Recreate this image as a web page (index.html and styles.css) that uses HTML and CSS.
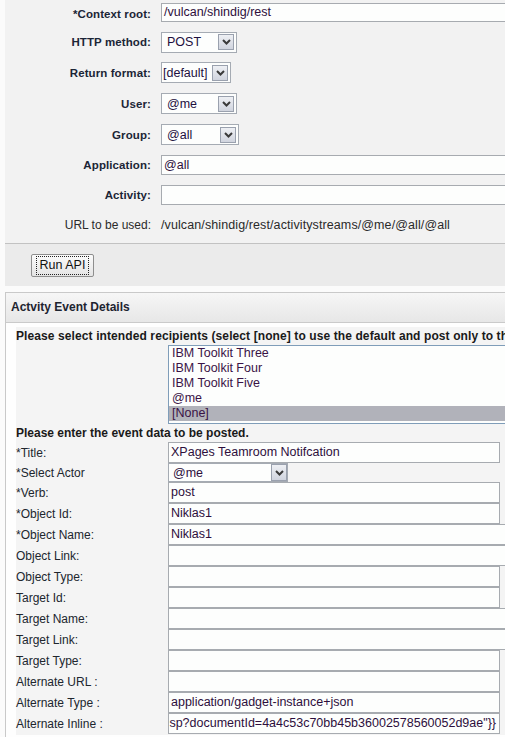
FILE: index.html
```html
<!DOCTYPE html>
<html lang="en">
<head>
<meta charset="utf-8">
<title>Activity Streams API</title>
<link rel="stylesheet" href="styles.css">
</head>
<body>
<div class="page">
  <section class="api-form">
    <div class="api-label">*Context root:</div>
    <div class="api-field api-field--first"><div class="textbox textbox--top">/vulcan/shindig/rest</div></div>

    <div class="api-label">HTTP method:</div>
    <div class="api-field">
      <div class="select select--http"><span class="select-value">POST</span><span class="select-btn"><svg width="9" height="6" viewBox="0 0 9 6"><polyline points="1,1 4.5,4.5 8,1" fill="none" stroke="#3a3a3a" stroke-width="2"/></svg></span></div>
    </div>

    <div class="api-label">Return format:</div>
    <div class="api-field">
      <div class="select select--format"><span class="select-value select-value--tight">[default]</span><span class="select-btn"><svg width="9" height="6" viewBox="0 0 9 6"><polyline points="1,1 4.5,4.5 8,1" fill="none" stroke="#3a3a3a" stroke-width="2"/></svg></span></div>
    </div>

    <div class="api-label">User:</div>
    <div class="api-field">
      <div class="select select--user"><span class="select-value">@me</span><span class="select-btn"><svg width="9" height="6" viewBox="0 0 9 6"><polyline points="1,1 4.5,4.5 8,1" fill="none" stroke="#3a3a3a" stroke-width="2"/></svg></span></div>
    </div>

    <div class="api-label">Group:</div>
    <div class="api-field">
      <div class="select select--group"><span class="select-value">@all</span><span class="select-btn"><svg width="9" height="6" viewBox="0 0 9 6"><polyline points="1,1 4.5,4.5 8,1" fill="none" stroke="#3a3a3a" stroke-width="2"/></svg></span></div>
    </div>

    <div class="api-label">Application:</div>
    <div class="api-field"><div class="textbox textbox--top">@all</div></div>

    <div class="api-label">Activity:</div>
    <div class="api-field"><div class="textbox textbox--top"></div></div>

    <div class="api-label api-label--plain">URL to be used:</div>
    <div class="api-field api-url">/vulcan/shindig/rest/activitystreams/@me/@all/@all</div>
  </section>

  <div class="button-bar">
    <button class="run-btn" type="button"><span class="run-btn-focus">Run API</span></button>
  </div>

  <section class="panel">
    <header class="panel-header">Actvity Event Details</header>
    <div class="panel-body">
      <div class="event-grid">
        <div class="event-heading event-heading--first">Please select intended recipients (select [none] to use the default and post only to the current user)</div>
        <div class="event-list-cell">
          <ul class="listbox">
            <li>IBM Toolkit Three</li>
            <li>IBM Toolkit Four</li>
            <li>IBM Toolkit Five</li>
            <li>@me</li>
            <li class="is-selected">[None]</li>
          </ul>
        </div>
        <div class="event-heading event-heading--data">Please enter the event data to be posted.</div>

        <div class="event-label">*Title:</div>
        <div class="event-field"><div class="textbox">XPages Teamroom Notifcation</div></div>

        <div class="event-label">*Select Actor</div>
        <div class="event-field">
          <div class="select select--actor"><span class="select-value">@me</span><span class="select-btn"><svg width="9" height="6" viewBox="0 0 9 6"><polyline points="1,1 4.5,4.5 8,1" fill="none" stroke="#3a3a3a" stroke-width="2"/></svg></span></div>
        </div>

        <div class="event-label">*Verb:</div>
        <div class="event-field"><div class="textbox">post</div></div>

        <div class="event-label">*Object Id:</div>
        <div class="event-field"><div class="textbox">Niklas1</div></div>

        <div class="event-label">*Object Name:</div>
        <div class="event-field"><div class="textbox textbox--wide">Niklas1</div></div>

        <div class="event-label">Object Link:</div>
        <div class="event-field"><div class="textbox textbox--wide"></div></div>

        <div class="event-label">Object Type:</div>
        <div class="event-field"><div class="textbox"></div></div>

        <div class="event-label">Target Id:</div>
        <div class="event-field"><div class="textbox"></div></div>

        <div class="event-label">Target Name:</div>
        <div class="event-field"><div class="textbox textbox--wide"></div></div>

        <div class="event-label">Target Link:</div>
        <div class="event-field"><div class="textbox textbox--wide"></div></div>

        <div class="event-label">Target Type:</div>
        <div class="event-field"><div class="textbox"></div></div>

        <div class="event-label">Alternate URL :</div>
        <div class="event-field"><div class="textbox"></div></div>

        <div class="event-label">Alternate Type :</div>
        <div class="event-field"><div class="textbox">application/gadget-instance+json</div></div>

        <div class="event-label">Alternate Inline :</div>
        <div class="event-field"><div class="textbox textbox--scrolled"><span>sp?documentId=4a4c53c70bb45b36002578560052d9ae"}}</span></div></div>
      </div>
    </div>
  </section>
</div>
</body>
</html>
```

FILE: styles.css
```css
html {
  overflow: hidden;
}

body {
  margin: 0;
  padding: 0;
  overflow: hidden;
  background: #fbfbfb;
  font-family: "Liberation Sans", Arial, sans-serif;
  font-size: 12px;
  color: #222;
}

.page {
  width: 720px;
}

/* ---------- top API form ---------- */
.api-form {
  margin-left: 5px;
  background: #f2f2f2;
  display: grid;
  grid-template-columns: 146px 1fr;
  grid-template-rows: 27px 30px 31px 31px 31px 30px 30px 29px;
  column-gap: 10px;
  align-items: center;
  padding-bottom: 4px;
}

.api-label {
  text-align: right;
  font-weight: bold;
  font-size: 11.5px;
  letter-spacing: 0.1px;
  color: #1b2536;
  white-space: nowrap;
}

.api-label--plain {
  font-weight: normal;
  font-size: 12px;
  letter-spacing: 0;
  color: #2a2a2a;
}

.api-field {
  display: flex;
  align-items: center;
}

.api-field--first {
  align-self: start;
  margin-top: 3px;
}

.api-url {
  font-size: 12.5px;
  letter-spacing: 0.1px;
  color: #2a2a2a;
  white-space: nowrap;
}

/* ---------- text boxes ---------- */
.textbox {
  box-sizing: border-box;
  height: 21px;
  width: 332px;
  border: 1px solid #a7abb0;
  background: #fdfefd;
  padding: 0 2px;
  font-size: 12.5px;
  line-height: 19px;
  color: #2d0f3c;
  white-space: nowrap;
  overflow: hidden;
}

.textbox--top {
  width: 420px;
  height: 20px;
  line-height: 18px;
  padding-left: 2px;
}

.api-field--first .textbox--top {
  height: 19px;
  line-height: 17px;
}

.textbox--wide {
  width: 420px;
}

.textbox--scrolled {
  display: flex;
  justify-content: flex-end;
  padding: 0 3px 0 1px;
}

.textbox--scrolled span {
  flex-shrink: 0;
}

/* ---------- selects ---------- */
.select {
  box-sizing: border-box;
  display: flex;
  align-items: center;
  justify-content: space-between;
  height: 21px;
  border: 1px solid #a5abb3;
  background: #fdfefd;
  padding-right: 2px;
  font-size: 12.5px;
  color: #1e1040;
}

.select--http { width: 76px; }
.select--format { width: 70px; }
.select--user { width: 76px; }
.select--group { width: 78px; }

.select-value {
  padding-left: 5px;
  white-space: nowrap;
}

.select-value--tight {
  padding-left: 1px;
}

.select-btn {
  box-sizing: border-box;
  width: 16px;
  height: 16px;
  border: 1px solid #9aa1ae;
  background: linear-gradient(#eef0f4, #d0d4de);
  display: flex;
  align-items: center;
  justify-content: center;
}

.select--actor {
  width: 120px;
  height: 19px;
  padding-right: 0;
  color: #2d0f3c;
}

.select--actor .select-value {
  padding-left: 4px;
}

.select--actor .select-btn {
  width: 16px;
  height: 17px;
}

/* ---------- button bar ---------- */
.button-bar {
  margin-left: 5px;
  border-top: 1px solid #c2c2c2;
  background: #ebebeb;
  padding: 10px 0 9px 26px;
  margin-bottom: 6px;
}

.run-btn {
  box-sizing: border-box;
  width: 63px;
  height: 23px;
  border: 1px solid #8e8e8e;
  border-radius: 2px;
  background: linear-gradient(#fbfbfb, #e4e4e4);
  padding: 0;
  display: flex;
  align-items: center;
  justify-content: center;
  font-family: "Liberation Sans", Arial, sans-serif;
  font-size: 12.5px;
  color: #111;
}

.run-btn-focus {
  display: block;
  border: 1px dotted #222;
  padding: 1px 3px;
  line-height: 15px;
}

/* ---------- activity panel ---------- */
.panel {
  margin-left: 5px;
  border-top: 1px solid #c9c9c9;
  border-left: 1px solid #c9c9c9;
  background: #fefefe;
}

.panel-header {
  box-sizing: border-box;
  height: 30px;
  border-bottom: 1px solid #cacaca;
  background: linear-gradient(#f6f6f6, #e7e7e7);
  padding-left: 5px;
  font-weight: bold;
  font-size: 12px;
  line-height: 29px;
  color: #1e2430;
}

.panel-body {
  padding: 4px 0 4px 10px;
}

.event-grid {
  display: grid;
  grid-template-columns: 152px 1fr;
  align-items: center;
  background: #f4f4f4;
  padding-bottom: 1px;
}

.event-heading {
  grid-column: 1 / -1;
  font-weight: bold;
  font-size: 12px;
  color: #1a1a1a;
  white-space: nowrap;
}

.event-heading--first {
  line-height: 18px;
  height: 18px;
  letter-spacing: 0.1px;
}

.event-heading--data {
  line-height: 18px;
  height: 18px;
}

.event-list-cell {
  grid-column: 2;
}

.listbox {
  box-sizing: border-box;
  list-style: none;
  margin: 0;
  width: 420px;
  height: 79px;
  border: 1px solid #7f9db9;
  background: #fdfefd;
  padding: 0 0 2px;
}

.listbox li {
  height: 15px;
  line-height: 15px;
  padding-left: 3px;
  font-size: 12.5px;
  color: #3a1346;
  white-space: nowrap;
}

.listbox li.is-selected {
  background: #b1b2ba;
}

.event-label {
  font-size: 12px;
  color: #20262e;
  white-space: nowrap;
}

.event-field {
  display: flex;
  align-items: center;
}
```
